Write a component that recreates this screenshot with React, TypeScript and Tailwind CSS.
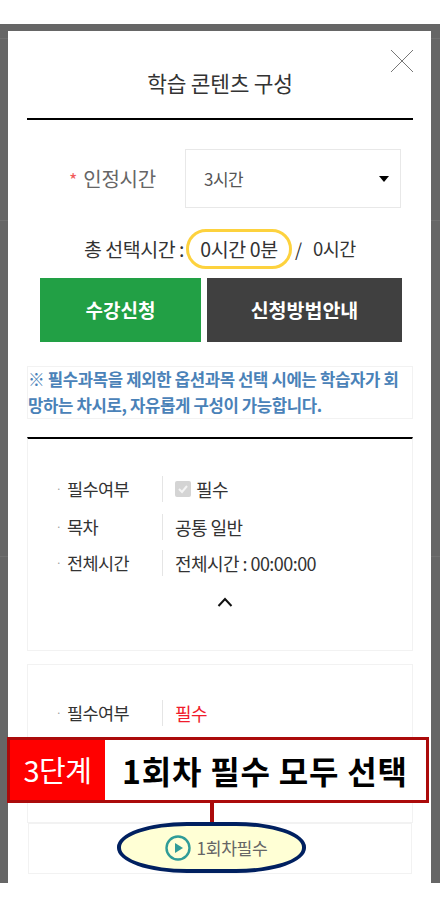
import React from "react";

const font = { fontFamily: '"Noto Sans CJK KR", "Noto Sans", sans-serif' };

const InfoRow: React.FC<{ label: string; children: React.ReactNode; className?: string }> = ({ label, children, className }) => (
  <div className={"flex items-center h-[26px] " + (className || "")}>
    <span className="w-[3px] text-[10px] text-[#999] leading-none ml-[28px]">·</span>
    <span className="w-[103px] pl-[8px] text-[17.5px] tracking-[-0.6px] text-[#333]">{label}</span>
    <span className="flex items-center h-full border-l border-[#e5e5e5] pl-[12px] text-[18px] tracking-[-0.55px] text-[#333]">{children}</span>
  </div>
);

export default function App() {
  return (
    <div className="relative w-[440px] h-[907px] bg-white pt-6 overflow-hidden" style={font}>
      <div className="relative h-[859px] bg-[#666666] pl-2 pr-[9px] pt-[7px]">
        {/* faint lines of the page behind the dim layer */}
        <div className="absolute left-0 right-0 top-[14px] h-px bg-[#707070]" />
        <div className="absolute left-0 right-0 top-[196px] h-px bg-[#707070]" />
        <div className="absolute left-0 right-0 top-[532px] h-px bg-[#707070]" />

        <div className="relative h-full bg-white pl-[19px] pr-[18px] overflow-hidden">
          <svg className="absolute right-[17px] top-[18px]" width="24" height="24" viewBox="0 0 24 24" fill="none" stroke="#777" strokeWidth="1">
            <path d="M1 1 L23 23 M23 1 L1 23" />
          </svg>

          <h2 className="h-[89px] pt-[37px] text-center text-[21.4px] leading-[30px] font-normal text-[#333] tracking-[-0.2px] border-b-2 border-black">
            학습 콘텐츠 구성
          </h2>

          <div className="flex items-center mt-[29px] h-[59px]">
            <div className="w-[158px] pl-[42px] text-[20px] tracking-[-0.2px] text-[#666]">
              <span className="text-[#f25c5c] mr-[6px] text-[18px]">*</span>인정시간
            </div>
            <div className="flex items-center justify-between w-[216px] h-full border border-[#e8e8e8] pl-[18px] pr-[11px] text-[17px] tracking-[-0.5px] text-[#555]">
              <span>3시간</span>
              <span className="w-0 h-0 border-x-[5px] border-x-transparent border-t-[6px] border-t-black" />
            </div>
          </div>

          <div className="flex items-center h-[40px] mt-[21px] pl-[57px] text-[#333]">
            <span className="w-[102px] text-[19.5px] tracking-[-0.5px] whitespace-nowrap">총 선택시간 :</span>
            <span className="flex items-center justify-center w-[106px] h-[40px] border-[3px] border-[#fdd23e] rounded-[20px] text-[19.5px] tracking-[-0.4px] whitespace-nowrap">
              0시간 0분
            </span>
            <span className="ml-[3px] text-[18px]">/</span>
            <span className="ml-[11px] text-[18.5px] tracking-[-0.5px]">0시간</span>
          </div>

          <div className="flex gap-[6px] mt-[9px] ml-[13px]">
            <button className="w-[161px] h-[64px] bg-[#22a045] text-white text-[19px] font-bold">수강신청</button>
            <button className="w-[195px] h-[64px] bg-[#404040] text-white text-[19.5px] font-bold">신청방법안내</button>
          </div>

          <p className="mt-[24px] h-[53px] border border-[#f2f2f2] text-[16.7px] leading-[25.5px] font-bold tracking-[-0.35px] text-[#4a82b8] whitespace-nowrap">
            <span>※ 필수과목을 제외한 옵션과목 선택 시에는 학습자가 회</span>
            <br />
            망하는 차시로, 자유롭게 구성이 가능합니다.
          </p>

          <div className="mt-[18px] h-[214px] border border-[#f2f2f2] border-t-2 border-t-black pt-[37px]">
            <InfoRow label="필수여부">
              <span className="flex items-center justify-center w-4 h-4 mr-[5px] rounded-[2px] bg-[#d4d4d4]">
                <svg width="12" height="12" viewBox="0 0 12 12" fill="none" stroke="#f4f4f4" strokeWidth="2">
                  <path d="M2 6 L5 9 L10 3" />
                </svg>
              </span>
              필수
            </InfoRow>
            <InfoRow label="목차" className="mt-[12px]">공통 일반</InfoRow>
            <InfoRow label="전체시간" className="mt-[10px]">전체시간 : 00:00:00</InfoRow>
            <div className="flex justify-center mt-[21px] ml-[10px]">
              <svg width="16" height="10" viewBox="0 0 16 10" fill="none" stroke="#111" strokeWidth="2">
                <path d="M1.5 9 L8 2 L14.5 9" />
              </svg>
            </div>
          </div>

          <div className="mt-[13px] h-[159px] border border-[#f2f2f2] pt-[35px]">
            <InfoRow label="필수여부">
              <span className="text-[#f01c2c]">필수</span>
            </InfoRow>
          </div>

          <div className="h-[51px] mx-[1px] border border-[#f2f2f2]" />
        </div>
      </div>

      {/* callout over the page */}
      <div className="absolute left-[7px] top-[737px] flex w-[422px] h-[66px] border-[3px] border-[#ab0a0a] bg-white">
        <div className="flex items-center justify-center w-[95px] h-full bg-[#ff0000] text-white text-[29px] tracking-[-0.5px]">3단계</div>
        <div className="flex-1 flex items-center pl-[17px] text-black text-[32px] font-bold tracking-[0.8px] whitespace-nowrap">1회차 필수 모두 선택</div>
      </div>
      <div className="absolute left-[210px] top-[803px] w-1 h-[21px] bg-[#ab0a0a]" />
      <div className="absolute left-[117px] top-[822px] flex items-center justify-center w-[189px] h-[51px] rounded-[70px/25px] border-[4px] border-[#002060] bg-[#ffffd5]">
        <svg width="26" height="26" viewBox="0 0 26 26" fill="none" className="ml-[9px] mr-[6px]">
          <circle cx="13" cy="13" r="11.5" stroke="#2f9c98" strokeWidth="2.4" />
          <path d="M10 8 L18 13 L10 18 Z" fill="#2f9c98" />
        </svg>
        <span className="text-[17.2px] tracking-[-0.4px] text-[#666]">1회차필수</span>
      </div>
    </div>
  );
}
